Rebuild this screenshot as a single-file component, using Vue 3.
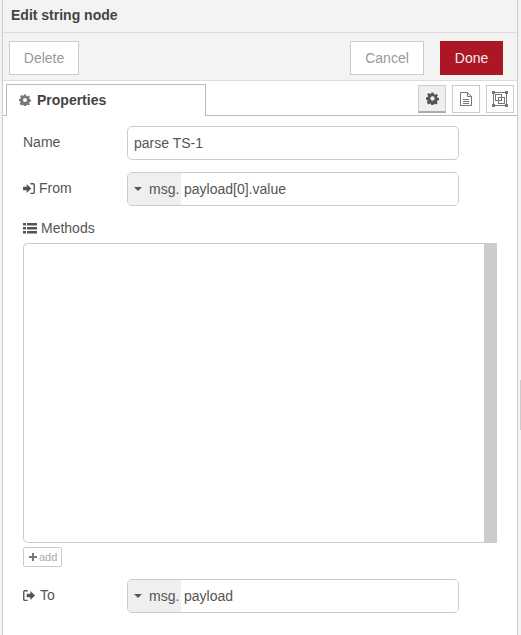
<template>
  <div class="page">
    <div class="tray">
      <header class="tray-header">Edit string node</header>
      <div class="tray-toolbar">
        <button class="btn">Delete</button>
        <div class="spacer"></div>
        <button class="btn cancel">Cancel</button>
        <button class="btn primary">Done</button>
      </div>
      <div class="tabs">
        <div class="tab">
          <svg class="gear" width="12" height="12" viewBox="0 0 24 24"><path :d="gearPath" fill-rule="evenodd" /></svg>
          <span>Properties</span>
        </div>
        <div class="tab-buttons">
          <button class="tab-btn selected">
            <svg width="13" height="13" viewBox="0 0 24 24"><path :d="gearPath" fill-rule="evenodd" /></svg>
          </button>
          <button class="tab-btn">
            <svg width="14" height="16" viewBox="0 0 14 16" fill="none" stroke="#777">
              <path d="M1.5 1.5h7l4 4v9h-11z" />
              <path d="M8.5 1.500v4h4M4 8.500h6M4 10.500h6M4 12.500h6" />
            </svg>
          </button>
          <button class="tab-btn">
            <svg width="16" height="16" viewBox="0 0 16 16" fill="none" stroke="#777">
              <rect x="1.5" y="1.5" width="13" height="13" />
              <rect x="3.5" y="3.5" width="6" height="6" />
              <rect x="6.5" y="6.5" width="6" height="6" />
              <path d="M0 0h3v3H0zM13 0h3v3h-3zM0 13h3v3H0zM13 13h3v3h-3z" fill="#777" stroke="none" />
            </svg>
          </button>
        </div>
      </div>
      <div class="form">
        <div class="row">
          <label>Name</label>
          <input class="text-input" type="text" value="parse TS-1" />
        </div>
        <div class="row">
          <label>
            <svg width="12" height="11" viewBox="0 0 13 12"><path :d="signInPath" /></svg>
            <span class="from-text">From</span>
          </label>
          <div class="typed">
            <span class="type-select"><i class="caret"></i>msg.</span>
            <input type="text" value="payload[0].value" />
          </div>
        </div>
        <div class="methods-label">
          <svg width="14" height="11" viewBox="0 0 14 11" fill="#555">
            <path d="M0 0h3v2.500H0zM4 0h10v2.500H4zM0 4h3v2.500H0zM4 4h10v2.500H4zM0 8h3v2.500H0zM4 8h10v2.500H4z" />
          </svg>
          Methods
        </div>
        <div class="methods-list"><div class="list-scroll"></div></div>
        <button class="add-btn">
          <svg width="8" height="8" viewBox="0 0 8 8" fill="#777"><path d="M3 0h2v3h3v2H5v3H3V5H0V3h3z" /></svg>
          add
        </button>
        <div class="row to-row">
          <label>
            <svg width="12" height="11" viewBox="0 0 13 12"><path :d="signOutPath" /></svg>
            <span class="to-text">To</span>
          </label>
          <div class="typed">
            <span class="type-select"><i class="caret"></i>msg.</span>
            <input type="text" value="payload" />
          </div>
        </div>
      </div>
    </div>
    <div class="handle"></div>
  </div>
</template>

<script setup>
const gearPath = 'M10 1h4l.6 3 2 .9 2.6-1.700 2.800 2.800-1.700 2.600.9 2 2.800.6v4l-3 .6-.9 2 1.700 2.600-2.800 2.800-2.600-1.700-2 .9-.6 2.800h-4l-.6-3-2-.9-2.600 1.700L1.400 19.200l1.700-2.600-.9-2L0 14v-4l3-.6.9-2L2.200 4.800 5 2l2.600 1.700 2-.9zM12 8a4 4 0 1 0 0 8 4 4 0 0 0 0-8z'
const signInPath = 'M0 4h4V1l5 5-5 5V8H0zM8 0h3a2 2 0 0 1 2 2v8a2 2 0 0 1-2 2H8v-1.500h3a.5.5 0 0 0 .5-.5V2a.5.5 0 0 0-.5-.5H8z'
const signOutPath = 'M5 0H2a2 2 0 0 0-2 2v8a2 2 0 0 0 2 2h3v-1.500H2a.5.5 0 0 1-.5-.5V2a.5.5 0 0 1 .5-.5h3zM4 4h4V1l5 5-5 5V8H4z'
</script>

<style>
html, body {
  margin: 0;
  background: #fff;
}
</style>

<style scoped>
.page {
  position: relative;
  box-sizing: border-box;
  width: 521px;
  height: 635px;
  overflow: hidden;
  padding: 0 3px 0 2px;
  background: #f3f3f3;
  font-family: "Liberation Sans", Arial, sans-serif;
  font-size: 14px;
  color: #555;
}
.tray {
  box-sizing: border-box;
  width: 516px;
  height: 635px;
  background: #fff;
  border-left: 1px solid #ccc;
  border-right: 1px solid #ccc;
}
.tray-header {
  height: 33px;
  line-height: 30px;
  padding-left: 8px;
  box-sizing: border-box;
  background: #f3f3f3;
  border-bottom: 1px solid #ddd;
  font-weight: bold;
  color: #444;
}
.tray-toolbar {
  display: flex;
  align-items: flex-start;
  height: 48px;
  box-sizing: border-box;
  padding: 8px 14px 0 6px;
  background: #f3f3f3;
  border-bottom: 1px solid #ddd;
}
.spacer { flex: 1; }
.btn {
  height: 34px;
  padding: 0;
  width: 70px;
  background: #fff;
  border: 1px solid #ccc;
  color: #999;
  font: inherit;
}
.cancel { width: 74px; margin-right: 16px; }
.primary {
  width: 63px;
  background: #ad1625;
  border-color: #ad1625;
  color: #eee;
}
.tabs {
  display: flex;
  justify-content: space-between;
  height: 35px;
  box-sizing: border-box;
  padding-left: 3px;
  border-bottom: 1px solid #bbb;
}
.tab {
  display: flex;
  align-items: center;
  gap: 6px;
  width: 200px;
  height: 32px;
  margin-top: 3px;
  padding: 0 0 2px 12px;
  box-sizing: border-box;
  background: #fff;
  border: 1px solid #bbb;
  border-bottom: 0;
  font-weight: bold;
  color: #444;
}
.gear { fill: #777; }
.tab-buttons {
  display: flex;
  gap: 6px;
  padding-top: 4px;
  margin-right: 3px;
}
.tab-btn {
  display: flex;
  align-items: center;
  justify-content: center;
  width: 28px;
  height: 28px;
  padding: 0;
  background: #fff;
  border: 1px solid #ccc;
}
.tab-btn.selected {
  background: #efefef;
  border-bottom: 2px solid #aaa;
}
.tab-btn.selected svg { fill: #555; }
.form {
  padding: 10px 0 0 20px;
}
.row {
  display: flex;
  align-items: center;
  height: 34px;
  margin-bottom: 14px;
}
.row label {
  display: flex;
  align-items: center;
  width: 104px;
  margin-top: -2px;
}
.row label svg { fill: #555; }
.from-text { margin-left: 4px; }
.to-text { margin-left: 5px; }
.text-input {
  box-sizing: border-box;
  width: 332px;
  height: 34px;
  padding: 0 6px;
  border: 1px solid #ccc;
  border-radius: 5px;
  font: inherit;
  color: #555;
  outline: 0;
}
.row:first-child { margin-bottom: 12px; }
.typed {
  display: flex;
  box-sizing: border-box;
  width: 332px;
  height: 34px;
  border: 1px solid #ccc;
  border-radius: 5px;
  overflow: hidden;
}
.type-select {
  display: flex;
  align-items: center;
  gap: 7px;
  width: 53px;
  padding-left: 6px;
  box-sizing: border-box;
  background: #efefef;
}
.caret {
  width: 0;
  height: 0;
  border-left: 4px solid transparent;
  border-right: 4px solid transparent;
  border-top: 4px solid #555;
}
.typed input {
  flex: 1;
  min-width: 0;
  border: 0;
  padding: 0 3px;
  font: inherit;
  color: #555;
  outline: 0;
}
.methods-label {
  display: flex;
  align-items: center;
  gap: 4px;
  height: 16px;
  margin-bottom: 7px;
}
.methods-list {
  display: flex;
  justify-content: flex-end;
  box-sizing: border-box;
  width: 474px;
  height: 300px;
  border: 1px solid #ccc;
  border-right: 0;
  border-radius: 5px 0 0 5px;
  overflow: hidden;
}
.list-scroll {
  width: 13px;
  background: #ccc;
}
.add-btn {
  display: flex;
  align-items: center;
  gap: 2px;
  height: 20px;
  width: 39px;
  margin: 4px 0 12px;
  padding: 0 0 0 5px;
  background: #fff;
  border: 1px solid #ccc;
  border-radius: 2px;
  color: #aaa;
  font: inherit;
  font-size: 11px;
}
.to-row { margin-bottom: 0; }
.handle {
  position: absolute;
  right: 0;
  top: 380px;
  width: 1px;
  height: 50px;
  background: #ccc;
}
</style>
